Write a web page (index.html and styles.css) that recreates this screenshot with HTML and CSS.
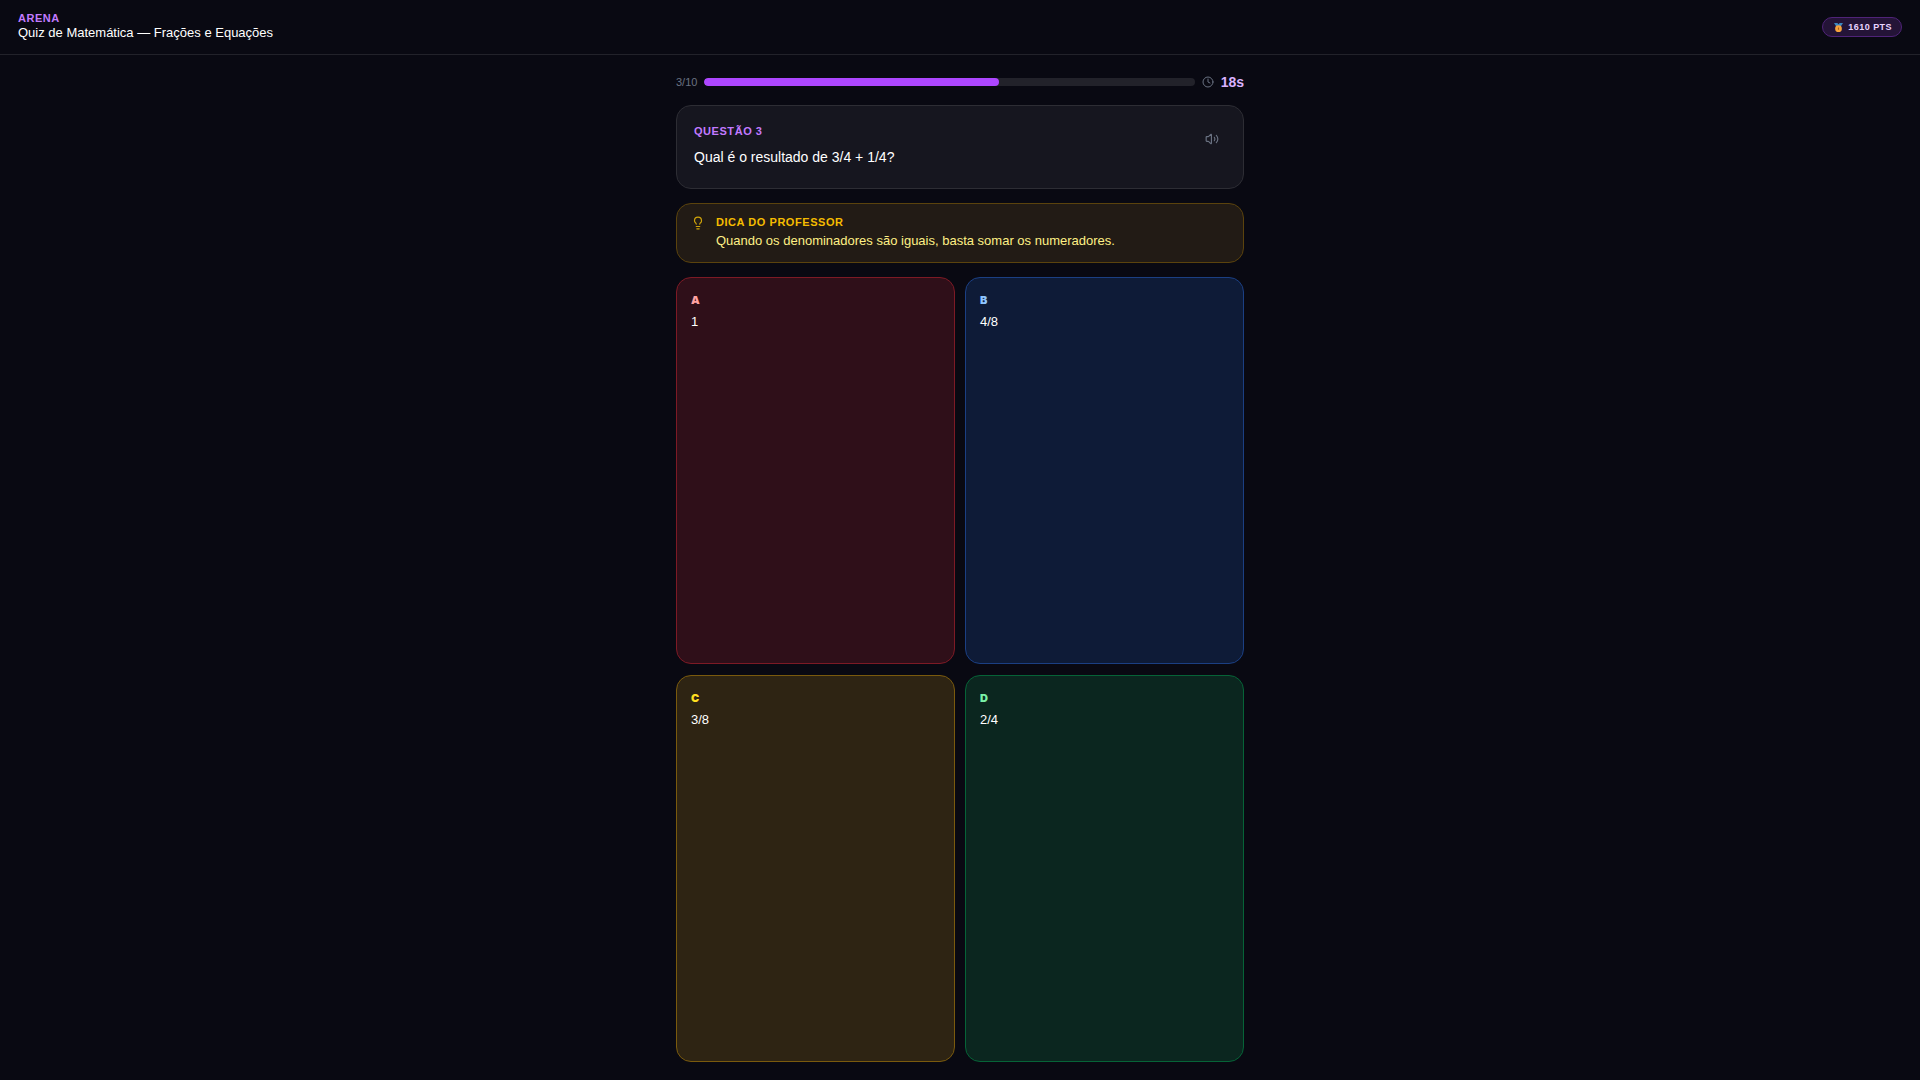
FILE: index.html
```html
<!doctype html>
<html lang="pt-BR">
<head>
    <meta charset="UTF-8">
    <meta name="viewport" content="width=device-width, initial-scale=1.0">
    <title>Arena - Quiz de Matemática</title>
    <link rel="stylesheet" href="styles.css">
</head>
<body>
<header class="topbar">
    <div class="topbar-title">
        <p class="label">Arena</p>
        <h1>Quiz de Matemática — Frações e Equações</h1>
    </div>
    <div class="points">
        <svg class="medal" viewBox="0 0 16 16" aria-hidden="true">
            <path d="M0 0h6l2 2 2-2h6l-4 6H4z" fill="#3b88c3"/>
            <circle cx="8" cy="10" r="6" fill="#f7a23b"/>
            <path d="M7 8h2v4H7z" fill="#a65c1c"/>
        </svg>
        <span>1610 pts</span>
    </div>
</header>

<main class="quiz">
    <div class="status">
        <span class="count">3/10</span>
        <div class="progress"><div class="progress-fill" style="width: 60%"></div></div>
        <svg class="icon clock" viewBox="0 0 24 24" aria-hidden="true">
            <circle cx="12" cy="12" r="10"/>
            <path d="M12 6v6l4 2"/>
        </svg>
        <span class="timer">18s</span>
    </div>

    <section class="question">
        <div>
            <p class="label">Questão 3</p>
            <h2>Qual é o resultado de 3/4 + 1/4?</h2>
        </div>
        <button class="listen" type="button" aria-label="Ouvir questão">
            <svg class="icon" viewBox="0 0 24 24" aria-hidden="true">
                <path d="M11 4.702a.705.705 0 0 0-1.203-.498L6.413 7.587A1.400 1.400 0 0 1 5.416 8H3a1 1 0 0 0-1 1v6a1 1 0 0 0 1 1h2.416a1.400 1.400 0 0 1 .997.413l3.383 3.384A.705.705 0 0 0 11 19.298z"/>
                <path d="M16 9a5 5 0 0 1 0 6"/>
                <path d="M19.364 18.364a9 9 0 0 0 0-12.728"/>
            </svg>
        </button>
    </section>

    <section class="hint">
        <svg class="icon" viewBox="0 0 24 24" aria-hidden="true">
            <path d="M15 14c.2-1 .7-1.700 1.500-2.500 1-.9 1.500-2.200 1.500-3.500A6 6 0 0 0 6 8c0 1 .2 2.200 1.500 3.500.7.7 1.300 1.500 1.500 2.500"/>
            <path d="M9 18h6"/>
            <path d="M10 22h4"/>
        </svg>
        <div>
            <p class="label">Dica do professor</p>
            <p class="hint-text">Quando os denominadores são iguais, basta somar os numeradores.</p>
        </div>
    </section>

    <div class="answers">
        <button class="answer red" type="button"><span class="letter">A</span><span>1</span></button>
        <button class="answer blue" type="button"><span class="letter">B</span><span>4/8</span></button>
        <button class="answer yellow" type="button"><span class="letter">C</span><span>3/8</span></button>
        <button class="answer green" type="button"><span class="letter">D</span><span>2/4</span></button>
    </div>
</main>
</body>
</html>
```

FILE: styles.css
```css
/* Global Styles */
* {
    box-sizing: border-box;
}

body {
    font-family: 'Liberation Sans', Arial, sans-serif;
    font-size: 13px;
    line-height: 18px;
    background-color: #090912;
    color: #fff;
    margin: 0;
    min-height: 100vh;
    display: flex;
    flex-direction: column;
}

h1, h2, p {
    margin: 0;
}

.label {
    font-size: 11px;
    line-height: 16px;
    font-weight: bold;
    letter-spacing: 0.05em;
    text-transform: uppercase;
    color: #c27aff;
}

.icon {
    fill: none;
    stroke: currentColor;
    stroke-width: 2;
    stroke-linecap: round;
    stroke-linejoin: round;
    flex-shrink: 0;
}

/* Header */
.topbar {
    display: flex;
    justify-content: space-between;
    align-items: center;
    padding: 12px 18px;
    border-bottom: 1px solid #22222a;
}

.topbar .label {
    line-height: 12px;
}

.topbar h1 {
    font-size: 13px;
    line-height: 18px;
    font-weight: normal;
}

.points {
    display: flex;
    align-items: center;
    gap: 5px;
    height: 20px;
    padding: 0 9px 0 11px;
    border: 1px solid #4f2378;
    border-radius: 10px;
    background-color: #241437;
    color: #e9d4ff;
    font-size: 9px;
    font-weight: bold;
    letter-spacing: 0.05em;
    text-transform: uppercase;
}

.medal {
    width: 9px;
    height: 9px;
}

/* Quiz column */
.quiz {
    flex: 1;
    width: 100%;
    max-width: 604px;
    margin: 0 auto;
    padding: 18px;
    display: flex;
    flex-direction: column;
    gap: 14px;
}

.status {
    display: flex;
    align-items: center;
    gap: 7px;
    height: 18px;
}

.count {
    font-size: 11px;
    color: #6a7282;
}

.progress {
    flex: 1;
    height: 8px;
    border-radius: 4px;
    background-color: #22222a;
    overflow: hidden;
}

.progress-fill {
    height: 100%;
    border-radius: 4px;
    background-color: #ad46ff;
}

.clock {
    width: 12px;
    height: 12px;
    color: #6a7282;
}

.timer {
    font-size: 14px;
    font-weight: 900;
    color: #dab2ff;
}

.question {
    display: flex;
    justify-content: space-between;
    align-items: flex-start;
    padding: 17px;
    min-height: 84px;
    border: 1px solid #2d2d34;
    border-radius: 15px;
    background-color: #16161f;
}

.question h2 {
    margin-top: 8px;
    font-size: 14px;
    line-height: 20px;
    font-weight: normal;
}

.listen {
    display: flex;
    margin: 0;
    padding: 9px 7px;
    border: none;
    background: none;
    color: #6a7282;
    cursor: pointer;
}

.listen .icon {
    width: 14px;
    height: 14px;
}

.hint {
    display: flex;
    gap: 11px;
    padding: 10px 14px 12px;
    min-height: 60px;
    border: 1px solid #5b430d;
    border-radius: 15px;
    background-color: #221b15;
    color: #fff085;
}

.hint .icon {
    width: 14px;
    height: 14px;
    margin-top: 2px;
    color: #d0a40a;
}

.hint .label {
    color: #f5bc00;
}

.hint-text {
    margin-top: 2px;
}

/* Answers */
.answers {
    flex: 1;
    display: grid;
    grid-template-columns: 1fr 1fr;
    grid-auto-rows: 1fr;
    gap: 11px 10px;
}

.answer {
    display: flex;
    flex-direction: column;
    gap: 4px;
    padding: 13px 14px;
    border: 1px solid;
    border-radius: 15px;
    color: #fff;
    font: inherit;
    text-align: left;
    cursor: pointer;
}

.letter {
    font-family: 'Arial Black', Inter, sans-serif;
    font-size: 11px;
    font-weight: 900;
}

.red {
    background-color: #2f0f19;
    border-color: #7d1a25;
}

.red .letter {
    color: #ffa2a2;
}

.blue {
    background-color: #0e1b37;
    border-color: #1b3f83;
}

.blue .letter {
    color: #8ec5ff;
}

.yellow {
    background-color: #2e2413;
    border-color: #7a5a0d;
}

.yellow .letter {
    color: #ffdf20;
}

.green {
    background-color: #0b261f;
    border-color: #066337;
}

.green .letter {
    color: #7bf1a8;
}
```
